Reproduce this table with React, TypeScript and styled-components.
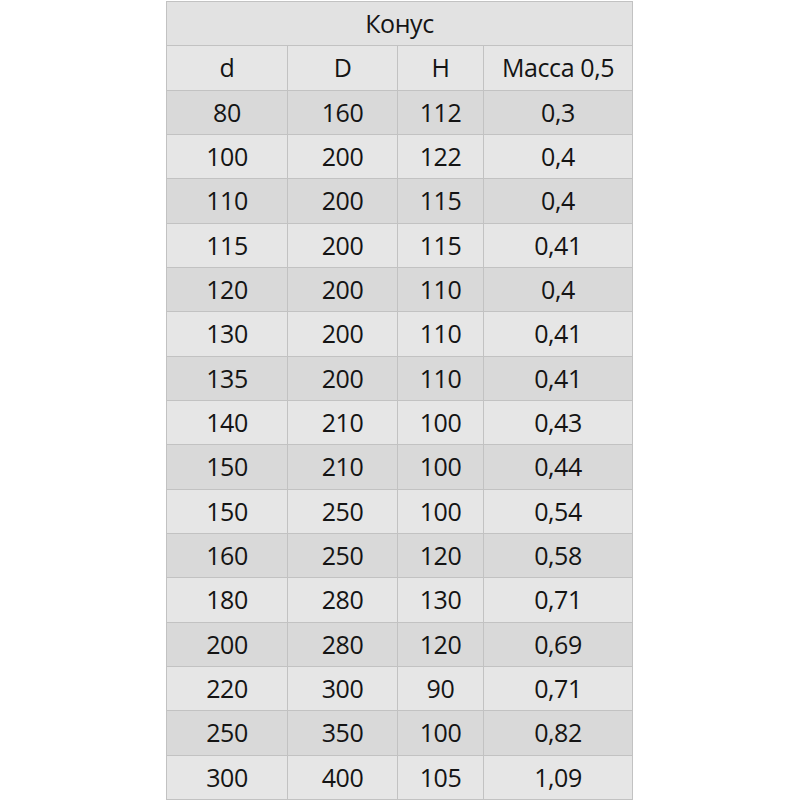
import styled, { createGlobalStyle } from 'styled-components';

const rows: [string, string, string, string][] = [
  ['80', '160', '112', '0,3'],
  ['100', '200', '122', '0,4'],
  ['110', '200', '115', '0,4'],
  ['115', '200', '115', '0,41'],
  ['120', '200', '110', '0,4'],
  ['130', '200', '110', '0,41'],
  ['135', '200', '110', '0,41'],
  ['140', '210', '100', '0,43'],
  ['150', '210', '100', '0,44'],
  ['150', '250', '100', '0,54'],
  ['160', '250', '120', '0,58'],
  ['180', '280', '130', '0,71'],
  ['200', '280', '120', '0,69'],
  ['220', '300', '90', '0,71'],
  ['250', '350', '100', '0,82'],
  ['300', '400', '105', '1,09'],
];

const App = () => {
  return (
    <>
      <GlobalStyle />
      <Page>
        <Table>
          <colgroup>
            <col style={{ width: 121 }} />
            <col style={{ width: 110 }} />
            <col style={{ width: 86 }} />
            <col style={{ width: 149 }} />
          </colgroup>
          <thead>
            <Row $tone="title">
              <Cell colSpan={4}>Конус</Cell>
            </Row>
            <Row $tone="light">
              <Cell>d</Cell>
              <Cell>D</Cell>
              <Cell>H</Cell>
              <Cell>Масса 0,5</Cell>
            </Row>
          </thead>
          <tbody>
            {rows.map((r, i) => (
              <Row key={i} $tone={i % 2 === 0 ? 'dark' : 'light'}>
                {r.map((v, j) => (
                  <Cell key={j}>{v}</Cell>
                ))}
              </Row>
            ))}
          </tbody>
        </Table>
      </Page>
    </>
  );
};

export default App;

const GlobalStyle = createGlobalStyle`
  html, body {
    margin: 0;
    padding: 0;
    background: #ffffff;
  }
`;

const Page = styled.div`
  width: 800px;
  height: 800px;
  padding: 1px 0 0 166px;
  box-sizing: border-box;
`;

const Table = styled.table`
  width: 466px;
  border-collapse: collapse;
  table-layout: fixed;
  font-family: 'Open Sans', 'Liberation Sans', sans-serif;
  font-size: 25px;
  letter-spacing: -0.4px;
  color: #141414;
`;

const tones = {
  title: '#e2e2e2',
  light: '#e6e6e6',
  dark: '#d9d9d9',
};

const Row = styled.tr<{ $tone: keyof typeof tones }>`
  height: 44.33px;
  background: ${({ $tone }) => tones[$tone]};
`;

const Cell = styled.td`
  border: 1px solid #c2c2c2;
  text-align: center;
  vertical-align: middle;
  padding: 0;
  line-height: 1;
`;
